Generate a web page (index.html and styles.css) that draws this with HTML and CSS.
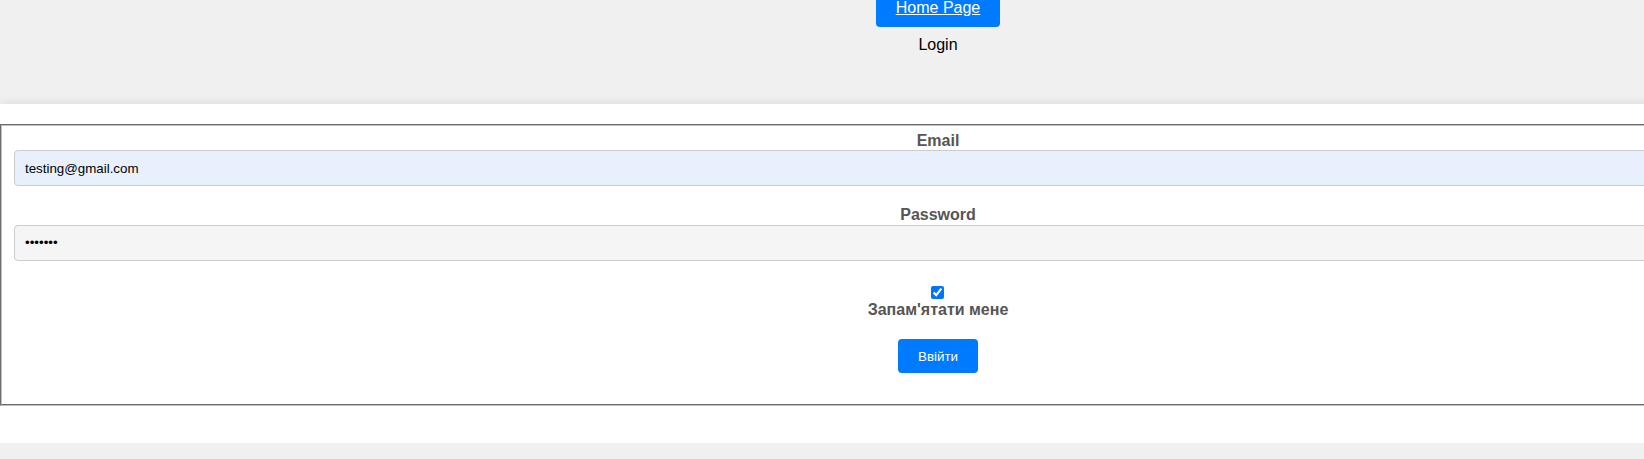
FILE: index.html
```html
<!DOCTYPE html>
<html lang="uk">
<head>
<meta charset="utf-8">
<title>Login</title>
<link rel="stylesheet" href="styles.css">
</head>
<body>
<div class="page">
  <header class="header">
    <a class="home-link" href="#">Home Page</a>
    <div class="title">Login</div>
  </header>
  <section class="panel">
    <form class="login-form">
      <fieldset class="box">
        <label class="field-label" for="email">Email</label>
        <input class="field email" id="email" type="email" value="testing@gmail.com">
        <label class="field-label pw-label" for="password">Password</label>
        <input class="field password" id="password" type="password" value="1234567">
        <div class="remember">
          <input class="check" id="remember" type="checkbox" checked>
          <label class="field-label" for="remember">Запам'ятати мене</label>
        </div>
        <button class="submit" type="button">Ввійти</button>
      </fieldset>
    </form>
  </section>
</div>
</body>
</html>
```
FILE: styles.css
```css
html, body {
  margin: 0;
  padding: 0;
  overflow: hidden;
  background: #f0f0f0;
  font-family: "Liberation Sans", Arial, sans-serif;
  line-height: 1.15;
}

.page {
  width: 1876px;
}

.header {
  display: flex;
  flex-direction: column;
  align-items: center;
  gap: 9px;
  margin-top: -11px;
  padding-bottom: 49px;
}

.home-link {
  display: inline-block;
  background: #007bff;
  color: #fff;
  font-size: 16px;
  line-height: 18.4px;
  padding: 10px 20px;
  border-radius: 4px;
  text-decoration: underline;
}

.title {
  font-size: 16px;
  line-height: 18.4px;
  color: #000;
}

.panel {
  background: #fff;
  box-shadow: 0 0 10px rgba(0, 0, 0, 0.1);
  padding: 20px 0 37px;
}

.login-form {
  margin: 0;
}

.box {
  margin: 0;
  border: 2px groove rgb(192, 192, 192);
  padding: 6px 12px 10px;
  display: flex;
  flex-direction: column;
  align-items: center;
  text-align: center;
}

.field-label {
  display: block;
  font-weight: bold;
  font-size: 16px;
  line-height: 18.4px;
  color: #555;
}

.pw-label {
  margin-top: 20px;
}

.field {
  box-sizing: border-box;
  width: 100%;
  height: 36px;
  margin: 0;
  padding: 0 10px;
  border: 1px solid #ccc;
  border-radius: 4px;
  font-family: "Liberation Sans", Arial, sans-serif;
  font-size: 13.33px;
  color: #000;
}

.email {
  background: #e8f0fe;
}

.password {
  background: #f5f5f5;
}

.remember {
  margin-top: 21px;
  display: flex;
  flex-direction: column;
  align-items: center;
}

.check {
  width: 13px;
  height: 13px;
  margin: 4px 0 2px;
}

.submit {
  margin-top: 20px;
  margin-bottom: 21px;
  height: 34px;
  padding: 0 20px;
  border: none;
  border-radius: 4px;
  background: #007bff;
  color: #fff;
  font-family: "Liberation Sans", Arial, sans-serif;
  font-size: 13.33px;
}
```
